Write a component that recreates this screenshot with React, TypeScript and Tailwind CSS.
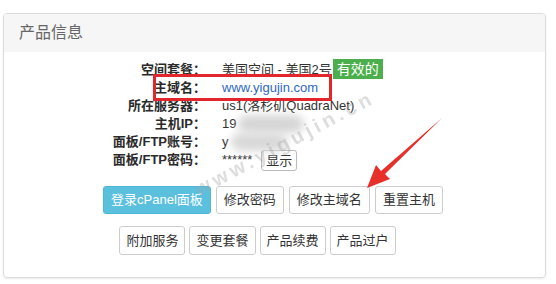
const rows = [
  { label: '空间套餐：', value: 'plan' },
  { label: '主域名：', value: 'domain' },
  { label: '所在服务器：', value: 'us1(洛杉矶QuadraNet)' },
  { label: '主机IP：', value: 'ip' },
  { label: '面板/FTP账号：', value: 'user' },
  { label: '面板/FTP密码：', value: 'pass' },
];

const actionsTop = ['修改密码', '修改主域名', '重置主机'];
const actionsBottom = ['附加服务', '变更套餐', '产品续费', '产品过户'];

function Value({ kind }: { kind: string }) {
  if (kind === 'plan') {
    return (
      <span className="flex items-center">
        美国空间 - 美国2号
        <span className="ml-[1px] -mt-[3px] bg-[#4cae4c] px-[4px] h-[20px] leading-[20px] text-[14px] text-white">
          有效的
        </span>
      </span>
    );
  }
  if (kind === 'domain') {
    return <span className="text-[#3068c4]">www.yigujin.com</span>;
  }
  if (kind === 'ip') {
    return (
      <span className="flex items-center">
        19
        <span className="ml-[2px] inline-block w-[66px] h-[18px] rounded-full bg-[#d6d6d6] blur-[4px]" />
      </span>
    );
  }
  if (kind === 'user') {
    return (
      <span className="flex items-center">
        y
        <span className="ml-[2px] inline-block w-[56px] h-[18px] rounded-full bg-[#d8d8d8] blur-[4px]" />
      </span>
    );
  }
  if (kind === 'pass') {
    return (
      <span className="flex items-center">
        ******
        <button className="ml-[9px] h-[21px] px-[4px] border border-[#bbb] rounded-[3px] bg-white text-[13px] leading-[19px] text-[#333]">
          显示
        </button>
      </span>
    );
  }
  return <span>{kind}</span>;
}

export default function App() {
  return (
    <div
      className="w-[556px] h-[284px] bg-white pt-[13px] pl-[3px]"
      style={{ fontFamily: '"Liberation Sans", "Noto Sans CJK SC", sans-serif' }}
    >
      <div className="relative w-[543px] h-[265px] border border-[#dcdcdc] rounded-[4px] shadow-[0_1px_2px_rgba(0,0,0,0.08)] overflow-hidden">
        <div className="h-[38px] bg-[#f6f6f6] pl-[15px] flex items-center text-[16px] text-[#666]">
          产品信息
        </div>

        <div className="pt-[9px] text-[13px] text-[#333]">
          {rows.map((r) => (
            <div key={r.label} className="flex items-center h-[18px]">
              <div className="w-[202px] text-right font-bold text-[#2a2a2a]">{r.label}</div>
              <div className="pl-[16px]">
                <Value kind={r.value} />
              </div>
            </div>
          ))}
        </div>

        <div className="mt-[17px] flex justify-center gap-[5px] pr-[3px] text-[13px]">
          <button className="h-[28px] px-[7px] rounded-[3px] bg-[#5bc0de] border border-[#4cb9d9] text-white">
            登录cPanel面板
          </button>
          {actionsTop.map((a) => (
            <button key={a} className="h-[28px] px-[7px] rounded-[3px] bg-white border border-[#ccc] text-[#333]">
              {a}
            </button>
          ))}
        </div>

        <div className="mt-[12px] flex justify-center gap-[4px] pr-[34px] text-[13px]">
          {actionsBottom.map((a) => (
            <button key={a} className="h-[29px] px-[6px] rounded-[3px] bg-white border border-[#ccc] text-[#333]">
              {a}
            </button>
          ))}
        </div>

        {/* highlight box */}
        <div className="absolute left-[149px] top-[60px] w-[179px] h-[27px] border-[3px] border-[#e3262b]" />

        {/* watermark */}
        <div className="absolute left-[180px] top-[114px] rotate-[-28deg] text-[20px] font-bold tracking-[4px] text-[#a0a0a0] opacity-35 whitespace-nowrap pointer-events-none">
          www.yigujin.cn
        </div>

        {/* arrow */}
        <svg className="absolute left-0 top-0 pointer-events-none" width="543" height="265">
          <polygon points="363,174 386,165 381,160 438,104 377,157 372,151" fill="#e8302a" />
        </svg>
      </div>
    </div>
  );
}
